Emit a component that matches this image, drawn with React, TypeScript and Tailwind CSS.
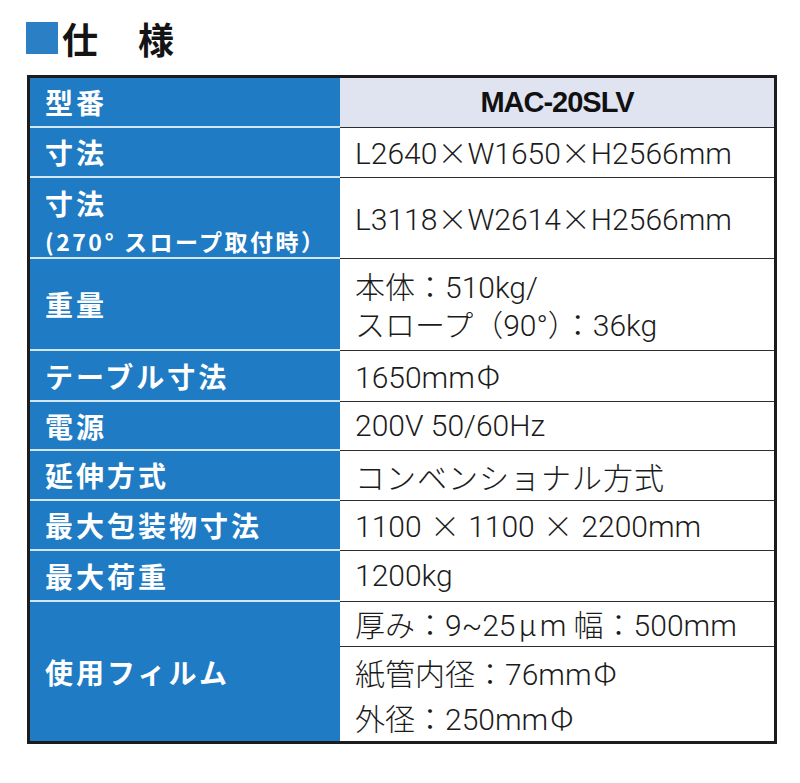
import React from "react";

const CJK = "font-['Noto_Sans_CJK_JP',sans-serif]";

function Label({ children }: { children: React.ReactNode }) {
  return (
    <div className="w-[310px] shrink-0 bg-[#1f7bc3] border-b-2 border-[#d3e7f7] flex items-center pl-[15px] text-white font-bold text-[28px] tracking-[3px] leading-none">
      {children}
    </div>
  );
}

function Cell({ children, last = false, className = "" }: { children: React.ReactNode; last?: boolean; className?: string }) {
  return (
    <div className={`flex-1 flex items-center pl-[15px] ${last ? "" : "border-b border-[#2e2e2e]"} ${className}`}>
      {children}
    </div>
  );
}

const X = () => <span className={`${CJK} font-light`}>×</span>;
const Phi = () => <span className={`${CJK} font-light ml-[2px]`}>Φ</span>;

export default function App() {
  return (
    <div className="w-[800px] h-[783px] bg-white font-['Noto_Sans_CJK_JP',sans-serif]">
      <div className="flex items-center ml-[26px] pt-[20px] h-[56px]">
        <div className="w-[32px] h-[32px] bg-[#2b80c5]" />
        <span className="ml-[4px] text-[36px] font-bold leading-none tracking-[2px] text-[#141414]">仕　様</span>
      </div>
      <div className="ml-[27px] mt-[19px] w-[750px] border-[3px] border-[#1c1c1c] font-['Noto_Sans_CJK_JP',sans-serif]">
        <div className="flex flex-col text-[30px] text-[#1b1b1b]">
          <div className="flex h-[50px]">
            <Label>型番</Label>
            <div className="flex-1 flex items-center justify-center bg-[#e0e4f1] border-b border-[#2e2e2e]">
              <span className="font-['Liberation_Sans',Arial,sans-serif] font-bold text-[29px] tracking-[-1px] text-[#111]">MAC-20SLV</span>
            </div>
          </div>
          <div className="flex h-[50px]">
            <Label>寸法</Label>
            <Cell>
              <span className="font-['Roboto',sans-serif] font-light leading-none">
                L2640<X />W1650<X />H2566mm
              </span>
            </Cell>
          </div>
          <div className="flex h-[81px]">
            <div className="w-[310px] shrink-0 bg-[#1f7bc3] border-b-2 border-[#d3e7f7] flex flex-col justify-start pt-[8px] pl-[15px] text-white font-bold">
              <span className="text-[28px] tracking-[3px] leading-[34px]">寸法</span>
              <span className="mt-[7px] text-[23px] leading-[28px] tracking-[2.5px]">(270° スロープ取付時）</span>
            </div>
            <Cell>
              <span className="font-['Roboto',sans-serif] font-light leading-none">
                L3118<X />W2614<X />H2566mm
              </span>
            </Cell>
          </div>
          <div className="flex h-[92px]">
            <Label>重量</Label>
            <Cell className="pt-[4px]">
              <div className="font-['Roboto','Noto_Sans_CJK_JP',sans-serif] font-light leading-[38px]">
                <div>本体：510kg/</div>
                <div>スロープ（90°）：36kg</div>
              </div>
            </Cell>
          </div>
          <div className="flex h-[51px]">
            <Label>テーブル寸法</Label>
            <Cell>
              <span className="font-['Roboto',sans-serif] font-light leading-none">
                1650mm<Phi />
              </span>
            </Cell>
          </div>
          <div className="flex h-[49px]">
            <Label>電源</Label>
            <Cell>
              <span className="font-['Roboto',sans-serif] font-light leading-none">200V 50/60Hz</span>
            </Cell>
          </div>
          <div className="flex h-[50px]">
            <Label>延伸方式</Label>
            <Cell>
              <span className="font-light leading-none tracking-[1px]">コンベンショナル方式</span>
            </Cell>
          </div>
          <div className="flex h-[50px]">
            <Label>最大包装物寸法</Label>
            <Cell>
              <span className="font-['Roboto',sans-serif] font-light leading-none">
                1100 <span className="mx-[1px]"><X /></span> 1100 <span className="mx-[1px]"><X /></span> 2200mm
              </span>
            </Cell>
          </div>
          <div className="flex h-[51px]">
            <Label>最大荷重</Label>
            <Cell>
              <span className="font-['Roboto',sans-serif] font-light leading-none">1200kg</span>
            </Cell>
          </div>
          <div className="flex h-[139px]">
            <div className="w-[310px] shrink-0 bg-[#1f7bc3] flex items-center pl-[15px] text-white font-bold text-[28px] tracking-[3px] leading-none">
              使用フィルム
            </div>
            <div className="flex-1 flex flex-col">
              <div className="h-[51px] flex items-center pl-[15px] border-b border-[#2e2e2e]">
                <span className="font-['Roboto','Noto_Sans_CJK_JP',sans-serif] font-light leading-none">
                  厚み：9~25<span className={`${CJK} font-light mx-[3px]`}>μ</span>m 幅：500mm
                </span>
              </div>
              <div className="flex-1 flex items-center pl-[15px] pt-[4px]">
                <div className="font-['Roboto','Noto_Sans_CJK_JP',sans-serif] font-light leading-[42px]">
                  <div>紙管内径：76mm<Phi /></div>
                  <div>外径：250mm<Phi /></div>
                </div>
              </div>
            </div>
          </div>
        </div>
      </div>
    </div>
  );
}
